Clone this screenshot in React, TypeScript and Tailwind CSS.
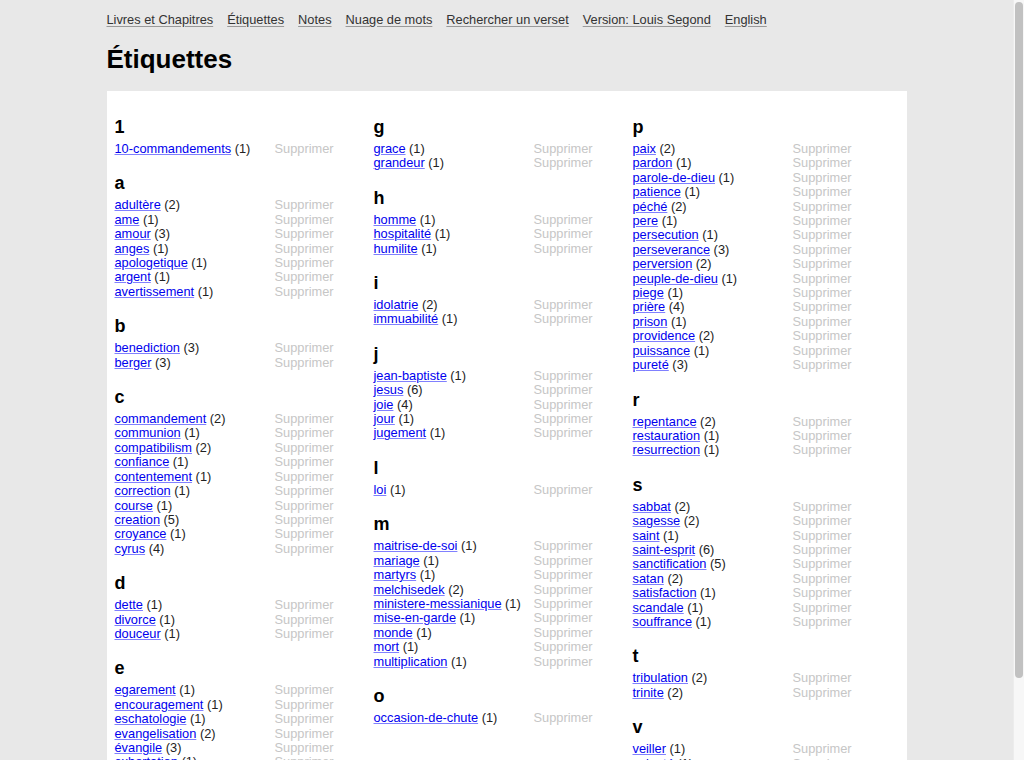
const navLinks = [
  'Livres et Chapitres',
  'Étiquettes',
  'Notes',
  'Nuage de mots',
  'Rechercher un verset',
  'Version: Louis Segond',
  'English',
];

type Tag = [string, number];
type Section = { letter: string; tags: Tag[] };

const columns: Section[][] = [
  [
    { letter: '1', tags: [['10-commandements', 1]] },
    {
      letter: 'a',
      tags: [
        ['adultère', 2],
        ['ame', 1],
        ['amour', 3],
        ['anges', 1],
        ['apologetique', 1],
        ['argent', 1],
        ['avertissement', 1],
      ],
    },
    { letter: 'b', tags: [['benediction', 3], ['berger', 3]] },
    {
      letter: 'c',
      tags: [
        ['commandement', 2],
        ['communion', 1],
        ['compatibilism', 2],
        ['confiance', 1],
        ['contentement', 1],
        ['correction', 1],
        ['course', 1],
        ['creation', 5],
        ['croyance', 1],
        ['cyrus', 4],
      ],
    },
    { letter: 'd', tags: [['dette', 1], ['divorce', 1], ['douceur', 1]] },
    {
      letter: 'e',
      tags: [
        ['egarement', 1],
        ['encouragement', 1],
        ['eschatologie', 1],
        ['evangelisation', 2],
        ['évangile', 3],
        ['exhortation', 1],
      ],
    },
    { letter: 'f', tags: [['foi', 3], ['fidelite', 1]] },
  ],
  [
    { letter: 'g', tags: [['grace', 1], ['grandeur', 1]] },
    { letter: 'h', tags: [['homme', 1], ['hospitalité', 1], ['humilite', 1]] },
    { letter: 'i', tags: [['idolatrie', 2], ['immuabilité', 1]] },
    {
      letter: 'j',
      tags: [
        ['jean-baptiste', 1],
        ['jesus', 6],
        ['joie', 4],
        ['jour', 1],
        ['jugement', 1],
      ],
    },
    { letter: 'l', tags: [['loi', 1]] },
    {
      letter: 'm',
      tags: [
        ['maitrise-de-soi', 1],
        ['mariage', 1],
        ['martyrs', 1],
        ['melchisedek', 2],
        ['ministere-messianique', 1],
        ['mise-en-garde', 1],
        ['monde', 1],
        ['mort', 1],
        ['multiplication', 1],
      ],
    },
    { letter: 'o', tags: [['occasion-de-chute', 1]] },
  ],
  [
    {
      letter: 'p',
      tags: [
        ['paix', 2],
        ['pardon', 1],
        ['parole-de-dieu', 1],
        ['patience', 1],
        ['péché', 2],
        ['pere', 1],
        ['persecution', 1],
        ['perseverance', 3],
        ['perversion', 2],
        ['peuple-de-dieu', 1],
        ['piege', 1],
        ['prière', 4],
        ['prison', 1],
        ['providence', 2],
        ['puissance', 1],
        ['pureté', 3],
      ],
    },
    { letter: 'r', tags: [['repentance', 2], ['restauration', 1], ['resurrection', 1]] },
    {
      letter: 's',
      tags: [
        ['sabbat', 2],
        ['sagesse', 2],
        ['saint', 1],
        ['saint-esprit', 6],
        ['sanctification', 5],
        ['satan', 2],
        ['satisfaction', 1],
        ['scandale', 1],
        ['souffrance', 1],
      ],
    },
    { letter: 't', tags: [['tribulation', 2], ['trinite', 2]] },
    { letter: 'v', tags: [['veiller', 1], ['volonté', 1]] },
  ],
];

function TagSection({ section }: { section: Section }) {
  return (
    <div className="mb-[15px]">
      <h3 className="text-[18px] font-bold leading-[24px] mb-[3px] text-black">{section.letter}</h3>
      {section.tags.map(([name, count]) => (
        <div key={name} className="flex text-[12.8px] leading-[14.4px]">
          <div className="w-[160px] shrink-0 text-[#222]">
            <a href="#" className="text-[#0000ee] underline decoration-[#8080ff]">
              {name}
            </a>{' '}
            ({count})
          </div>
          <a href="#" className="text-[#c6c6c6]">
            Supprimer
          </a>
        </div>
      ))}
    </div>
  );
}

export default function App() {
  return (
    <div className="flex h-[760px] overflow-hidden bg-[#e8e8e8] font-['Liberation_Sans',Arial,sans-serif]">
      <div className="flex-1 min-w-0">
        <div className="w-[800px] mx-auto pb-[20px]">
          {/* Nav */}
          <nav className="flex gap-[14px] pt-[12px] text-[12.8px] leading-[15px]">
            {navLinks.map((l) => (
              <a key={l} href="#" className="text-[#333] underline decoration-[#999] underline-offset-2">
                {l}
              </a>
            ))}
          </nav>

          <h1 className="mt-[17px] text-[26px] font-bold leading-[30px] text-black">Étiquettes</h1>

          {/* Tags */}
          <div className="mt-[17px] bg-white pt-[24px] pl-[8px] pb-[4px] grid grid-cols-[259px_259px_259px]">
            {columns.map((col, i) => (
              <div key={i}>
                {col.map((s) => (
                  <TagSection key={s.letter} section={s} />
                ))}
              </div>
            ))}
          </div>
        </div>
      </div>

      {/* page scrollbar */}
      <div className="w-[11px] shrink-0 bg-[#f7f7f7] border-l border-[#ececec] pt-[2px] px-[1px]">
        <div className="h-[676px] rounded-full bg-[#c1c1c1]" />
      </div>
    </div>
  );
}
